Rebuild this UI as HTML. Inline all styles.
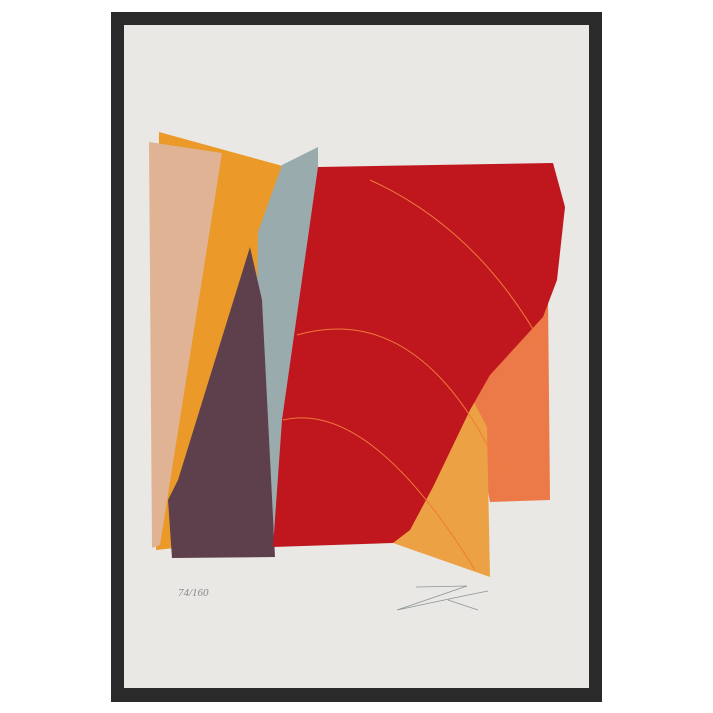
<!DOCTYPE html>
<html><head><meta charset="utf-8"><style>
html,body{margin:0;padding:0;background:#fff;width:713px;height:713px;overflow:hidden}
</style></head><body>
<svg width="713" height="713" viewBox="0 0 713 713" xmlns="http://www.w3.org/2000/svg">
<rect x="0" y="0" width="713" height="713" fill="#ffffff"/>
<rect x="111" y="12" width="491" height="690" fill="#2a2a2a"/>
<rect x="124" y="25" width="465" height="663" fill="#e9e8e4"/>
<polygon points="159,132 290,168 250,540 156,550" fill="#eb9a2a"/>
<polygon points="149,142 222,153 160,545 152,548" fill="#dfb394"/>
<polygon points="318,147 318,300 276,545 255,400 258,232 282,165" fill="#9aabae"/>
<polygon points="548,296 550,500 490,502 470,393" fill="#ec7a48"/>
<polygon points="470,395 487,427 490,577 393,543 433,480" fill="#eca144"/>
<polygon points="250,247 262,300 275,557 172,558 168,500 178,480" fill="#5e3f4c"/>
<polygon points="318,167 553,163 565,207 557,280 543,317 490,375 470,410 433,487 410,530 393,543 273,547 282,420" fill="#c0161e"/>
<g fill="none" stroke="#f07a3a" stroke-width="1">
<path d="M370,180 Q480,230 545,350"/>
<path d="M297,335 Q420,300 500,470"/>
<path d="M283,420 Q370,400 475,570"/>
</g>
<text x="178" y="596" font-family="Liberation Serif, serif" font-style="italic" font-size="11" fill="#8a8a8a">74/160</text>
<path d="M416,587 L467,586 L397,610 L468,595 L488,591 M448,600 L478,610" fill="none" stroke="#8a9595" stroke-width="0.8"/>
</svg>
</body></html>
